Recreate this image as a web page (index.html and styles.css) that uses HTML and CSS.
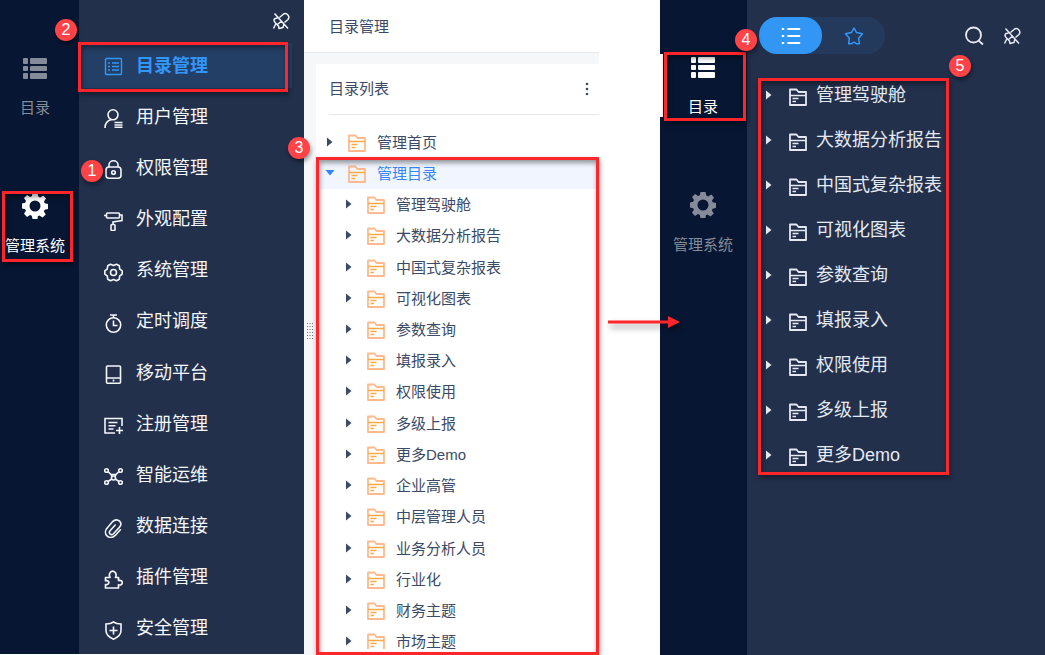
FILE: index.html
```html
<!DOCTYPE html>
<html lang="zh-CN">
<head>
    <meta charset="UTF-8">
    <meta name="viewport" content="width=device-width, initial-scale=1.0">
    <title>目录管理</title>
    <link rel="stylesheet" href="styles.css">
</head>
<body>

    <!-- Shared icons -->
    <svg class="sprite" aria-hidden="true">
        <symbol id="i-blocks" viewBox="0 0 26 26">
            <g fill="currentColor"><rect x="1" y="3" width="5" height="6" rx="1"/><rect x="8" y="3" width="17" height="6" rx="1"/><rect x="1" y="11" width="5" height="5" rx="1"/><rect x="8" y="11" width="17" height="5" rx="1"/><rect x="1" y="18" width="5" height="6" rx="1"/><rect x="8" y="18" width="17" height="6" rx="1"/></g>
        </symbol>
        <symbol id="i-cog" viewBox="0 0 26 26">
            <path fill="currentColor" fill-rule="evenodd" d="M10.5 0h5l.8 3.600 1.800.8L21.300 2.500 24 5.500 22 8.500l.7 1.700L26 11v5l-3.400.8-.7 1.700 1.900 3-3.300 3-3-1.900-1.700.7L15.500 26h-5l-.8-3.200-1.700-.7-3 1.900L2 20.800l1.900-3.100-.7-1.500L0 15.500v-5l3.200-.7.8-1.700L2 5.100 5.100 2l3 2 1.700-.7zM13 7.500a5.500 5.500 0 1 0 0 11 5.500 5.500 0 0 0 0-11z"/>
        </symbol>
        <symbol id="i-unpin" viewBox="0 0 18 18">
            <g fill="none" stroke="currentColor" stroke-width="1.500" stroke-linejoin="round"><path d="M7.500 5.500L11 2.500Q13 .5 15.500 2.500 18 5 16 7.500L12.500 10.500M5.500 6L2.500 6.800Q1 9 4 11.500L1.500 16.500M4 11.500L6.500 14l.5 2.500 4-1 .8-3M2.500 1.500L16 16.500M5 13L9.500 9"/></g>
        </symbol>
        <symbol id="i-catalog" viewBox="0 0 19 19">
            <g fill="none" stroke="currentColor" stroke-width="1.400"><rect x="1.500" y="1.500" width="16" height="16" rx="1"/><path d="M4 6h2M8 6h7M4 9.500h2M8 9.500h7M4 13h2M8 13h7"/></g>
        </symbol>
        <symbol id="i-user" viewBox="0 0 19 19">
            <g fill="none" stroke="currentColor" stroke-width="1.600"><circle cx="9" cy="5.800" r="5"/><path d="M1 19c0-5 2.500-7.500 6.500-8.500M10.500 13.500h8M10.500 16h8M10.500 18.300h8"/></g>
        </symbol>
        <symbol id="i-lock" viewBox="0 0 19 19">
            <g fill="none" stroke="currentColor" stroke-width="1.600"><rect x="2" y="7" width="15" height="11.200" rx="3"/><path d="M5 7V5a4.500 4.200 0 0 1 9 0v2"/><circle cx="9.500" cy="12.500" r="1.800"/></g>
        </symbol>
        <symbol id="i-roller" viewBox="0 0 19 19">
            <g fill="none" stroke="currentColor" stroke-width="1.600"><rect x="2.500" y="1" width="13" height="5" rx="1"/><path d="M0 3.500h2.500M15.500 3H18v5.500L9 10v2.500"/><rect x="7" y="12.500" width="4" height="6" rx="1"/></g>
        </symbol>
        <symbol id="i-setting" viewBox="0 0 19 19">
            <g fill="none" stroke="currentColor" stroke-width="1.600"><path d="M6.500 1.200L9.500 2.500l3-1.300 2.800 1.600.4 3.200 2.500 1.800v3.400l-2.500 1.800-.4 3.200-2.800 1.600-3-1.300-3 1.300-2.800-1.600-.4-3.200L.8 11.200V7.800L3.300 6l.4-3.200z" stroke-linejoin="round"/><circle cx="9.500" cy="9.500" r="3"/></g>
        </symbol>
        <symbol id="i-timer" viewBox="0 0 19 19">
            <g fill="none" stroke="currentColor" stroke-width="1.600"><circle cx="9.500" cy="11" r="7.200"/><path d="M6 1h7M9.500 1v3M9.500 6.500V11.500h4"/></g>
        </symbol>
        <symbol id="i-mobile" viewBox="0 0 19 19">
            <g fill="none" stroke="currentColor" stroke-width="1.600"><rect x="2.500" y="1" width="14" height="17.200" rx="1"/><path d="M2.500 13h14M9.500 14.500v2"/></g>
        </symbol>
        <symbol id="i-register" viewBox="0 0 19 19">
            <g fill="none" stroke="currentColor" stroke-width="1.600"><path d="M18 10V2.500H1v14.500h10M4.500 6.500h9M4.500 9.800h7M4.500 13h5M15.500 11v7M12 14.500h7"/></g>
        </symbol>
        <symbol id="i-nodes" viewBox="0 0 19 19">
            <g fill="none" stroke="currentColor" stroke-width="1.600"><circle cx="2.500" cy="3.500" r="1.800"/><circle cx="16.500" cy="3.500" r="1.800"/><circle cx="2.500" cy="15.500" r="1.800"/><circle cx="16.500" cy="15.500" r="1.800"/><circle cx="9.500" cy="11" r="2"/><path d="M4 4.500L7 7.500h5l3-3M4 14.500l3.800-2.500M15 14.500L11.200 12M7 7.500l1.200 2M12 7.500l-1.200 2"/></g>
        </symbol>
        <symbol id="i-clip" viewBox="1 1 22 22">
            <path fill="none" stroke="currentColor" stroke-width="1.800" stroke-linecap="round" d="M20 13.500l-6 6.500c-3 3-7 3-9.500.5s-2.500-6.500.5-9.500l6-7c2.500-2.600 6-2.500 8-.5s2 5-.5 7.500l-6.500 7c-1.300 1.300-3 1.300-4 .3s-1-2.600.3-4l5.700-6.300"/>
        </symbol>
        <symbol id="i-plugin" viewBox="0 0 19 19">
            <path fill="none" stroke="currentColor" stroke-width="1.700" stroke-linejoin="round" d="M1.500 7.500H6C4.500 4.500 6 1.200 8.700 1.200S13 4.500 11.500 7.500h3v3c2.500-.7 3.800.7 3.800 2.200s-1.300 2.800-3.800 2.100V18h-13v-3.500C6 15.500 6 9.500 1.500 10.800z"/>
        </symbol>
        <symbol id="i-shield" viewBox="0 0 19 19">
            <path fill="none" stroke="currentColor" stroke-width="1.600" d="M9.500 1c2 1.500 5 2 7.500 2v6.500c0 4-3.500 7-7.500 8.700C5.500 16.500 2 13.500 2 9.500V3c2.500 0 5.500-.5 7.500-2zM9.500 5.500v8M5.500 9.500h8"/>
        </symbol>
        <symbol id="i-folder" viewBox="0 0 18 18">
            <g fill="none" stroke="currentColor" stroke-width="1.800" stroke-linejoin="round"><path d="M1 17V1.500h6.500L9.500 4H17v13z"/><path class="folder-lines" d="M1 7.500h16M3.500 10.500h6M3.500 13.500h3.500" stroke-width="1.400"/></g>
        </symbol>
        <symbol id="i-caret" viewBox="0 0 6 10">
            <path fill="currentColor" d="M0 .5L5.500 5 0 9.500z"/>
        </symbol>
        <symbol id="i-list" viewBox="0 0 20 18">
            <path fill="none" stroke="currentColor" stroke-width="1.800" stroke-linecap="round" d="M1.500 2h1M7 2h11.500M1.500 9h1M7 9h11.500M1.500 16h1M7 16h11.500"/>
        </symbol>
        <symbol id="i-star" viewBox="0 0 20 18">
            <path fill="none" stroke="currentColor" stroke-width="1.500" stroke-linejoin="round" d="M10 1l2.600 4.600 5.900 1.200-3.900 4.400.8 5.600H13L10 15.200 7 16.800H4.600l.8-5.600L1.500 6.800l5.900-1.200z"/>
        </symbol>
        <symbol id="i-search" viewBox="0 0 20 20">
            <path fill="none" stroke="currentColor" stroke-width="1.800" d="M9.500 1.500a7.500 7.500 0 1 1 0 15 7.500 7.500 0 0 1 0-15zM14.800 14.800L19 18.500"/>
        </symbol>
    </svg>

    <div class="page">

        <nav class="rail rail-left">
            <a class="rail-item" href="#"><svg><use href="#i-blocks"/></svg><span>目录</span></a>
            <a class="rail-item active" href="#">
                <svg><use href="#i-cog"/></svg><span>管理系统</span>
                <i class="mark mark-system"></i>
                <b class="badge badge-1">1</b>
            </a>
        </nav>

        <nav class="menu">
            <div class="menu-top">
                <button type="button" class="icon-btn" aria-label="取消固定"><svg class="pin"><use href="#i-unpin"/></svg></button>
            </div>
            <ul class="menu-list">
                <li><a class="active" href="#"><svg><use href="#i-catalog"/></svg>目录管理<i class="mark mark-menu"></i><b class="badge badge-2">2</b></a></li>
                <li><a href="#"><svg><use href="#i-user"/></svg>用户管理</a></li>
                <li><a href="#"><svg><use href="#i-lock"/></svg>权限管理</a></li>
                <li><a href="#"><svg><use href="#i-roller"/></svg>外观配置</a></li>
                <li><a href="#"><svg><use href="#i-setting"/></svg>系统管理</a></li>
                <li><a href="#"><svg><use href="#i-timer"/></svg>定时调度</a></li>
                <li><a href="#"><svg><use href="#i-mobile"/></svg>移动平台</a></li>
                <li><a href="#"><svg><use href="#i-register"/></svg>注册管理</a></li>
                <li><a href="#"><svg><use href="#i-nodes"/></svg>智能运维</a></li>
                <li><a href="#"><svg><use href="#i-clip"/></svg>数据连接</a></li>
                <li><a href="#"><svg><use href="#i-plugin"/></svg>插件管理</a></li>
                <li><a href="#"><svg><use href="#i-shield"/></svg>安全管理</a></li>
            </ul>
        </nav>

        <main class="content">
            <h1>目录管理</h1>
            <div class="content-body">
                <div class="gutter">
                    <svg class="grip" viewBox="0 0 6 16"><path stroke="#6d7583" stroke-dasharray="1 2" d="M.5 0v16M3 0v16M5.500 0v16"/></svg>
                </div>
                <section class="card">
                    <header class="card-head">
                        <h2>目录列表</h2>
                        <button type="button" class="icon-btn" aria-label="更多"><svg class="dots" viewBox="0 0 4 14"><g fill="#3b4a66"><circle cx="2" cy="2" r="1.300"/><circle cx="2" cy="7" r="1.300"/><circle cx="2" cy="12" r="1.300"/></g></svg></button>
                    </header>
                    <div class="tree-wrap">
                        <div class="tree-scroll">
                            <ul class="tree">
                                <li><svg class="caret"><use href="#i-caret"/></svg><svg class="folder"><use href="#i-folder"/></svg>管理首页</li>
                                <li class="selected"><svg class="caret open"><use href="#i-caret"/></svg><svg class="folder"><use href="#i-folder"/></svg>管理目录</li>
                                <li class="sub"><svg class="caret"><use href="#i-caret"/></svg><svg class="folder"><use href="#i-folder"/></svg>管理驾驶舱</li>
                                <li class="sub"><svg class="caret"><use href="#i-caret"/></svg><svg class="folder"><use href="#i-folder"/></svg>大数据分析报告</li>
                                <li class="sub"><svg class="caret"><use href="#i-caret"/></svg><svg class="folder"><use href="#i-folder"/></svg>中国式复杂报表</li>
                                <li class="sub"><svg class="caret"><use href="#i-caret"/></svg><svg class="folder"><use href="#i-folder"/></svg>可视化图表</li>
                                <li class="sub"><svg class="caret"><use href="#i-caret"/></svg><svg class="folder"><use href="#i-folder"/></svg>参数查询</li>
                                <li class="sub"><svg class="caret"><use href="#i-caret"/></svg><svg class="folder"><use href="#i-folder"/></svg>填报录入</li>
                                <li class="sub"><svg class="caret"><use href="#i-caret"/></svg><svg class="folder"><use href="#i-folder"/></svg>权限使用</li>
                                <li class="sub"><svg class="caret"><use href="#i-caret"/></svg><svg class="folder"><use href="#i-folder"/></svg>多级上报</li>
                                <li class="sub"><svg class="caret"><use href="#i-caret"/></svg><svg class="folder"><use href="#i-folder"/></svg>更多Demo</li>
                                <li class="sub"><svg class="caret"><use href="#i-caret"/></svg><svg class="folder"><use href="#i-folder"/></svg>企业高管</li>
                                <li class="sub"><svg class="caret"><use href="#i-caret"/></svg><svg class="folder"><use href="#i-folder"/></svg>中层管理人员</li>
                                <li class="sub"><svg class="caret"><use href="#i-caret"/></svg><svg class="folder"><use href="#i-folder"/></svg>业务分析人员</li>
                                <li class="sub"><svg class="caret"><use href="#i-caret"/></svg><svg class="folder"><use href="#i-folder"/></svg>行业化</li>
                                <li class="sub"><svg class="caret"><use href="#i-caret"/></svg><svg class="folder"><use href="#i-folder"/></svg>财务主题</li>
                                <li class="sub"><svg class="caret"><use href="#i-caret"/></svg><svg class="folder"><use href="#i-folder"/></svg>市场主题</li>
                            </ul>
                        </div>
                        <i class="mark mark-tree"></i>
                        <b class="badge badge-3">3</b>
                    </div>
                </section>
            </div>
        </main>

        <div class="between">
            <svg class="arrow" viewBox="0 0 72 14"><path fill="#ff262b" d="M0 5.500h60V1l12 6-12 6V8.500H0z"/></svg>
        </div>

        <nav class="rail rail-right">
            <a class="rail-item active" href="#">
                <svg><use href="#i-blocks"/></svg><span>目录</span>
                <i class="mark mark-catalog"></i>
                <b class="badge badge-4">4</b>
            </a>
            <a class="rail-item" href="#"><svg><use href="#i-cog"/></svg><span>管理系统</span></a>
        </nav>

        <aside class="panel">
            <div class="toolbar">
                <div class="switch">
                    <button type="button" class="on" aria-label="目录"><svg><use href="#i-list"/></svg></button>
                    <button type="button" aria-label="收藏"><svg><use href="#i-star"/></svg></button>
                </div>
                <button type="button" class="icon-btn push" aria-label="搜索"><svg class="search"><use href="#i-search"/></svg></button>
                <button type="button" class="icon-btn" aria-label="取消固定"><svg class="pin"><use href="#i-unpin"/></svg></button>
            </div>
            <ul class="nav-tree">
                <li><svg class="caret"><use href="#i-caret"/></svg><svg class="folder"><use href="#i-folder"/></svg>管理驾驶舱</li>
                <li><svg class="caret"><use href="#i-caret"/></svg><svg class="folder"><use href="#i-folder"/></svg>大数据分析报告</li>
                <li><svg class="caret"><use href="#i-caret"/></svg><svg class="folder"><use href="#i-folder"/></svg>中国式复杂报表</li>
                <li><svg class="caret"><use href="#i-caret"/></svg><svg class="folder"><use href="#i-folder"/></svg>可视化图表</li>
                <li><svg class="caret"><use href="#i-caret"/></svg><svg class="folder"><use href="#i-folder"/></svg>参数查询</li>
                <li><svg class="caret"><use href="#i-caret"/></svg><svg class="folder"><use href="#i-folder"/></svg>填报录入</li>
                <li><svg class="caret"><use href="#i-caret"/></svg><svg class="folder"><use href="#i-folder"/></svg>权限使用</li>
                <li><svg class="caret"><use href="#i-caret"/></svg><svg class="folder"><use href="#i-folder"/></svg>多级上报</li>
                <li>
                    <svg class="caret"><use href="#i-caret"/></svg><svg class="folder"><use href="#i-folder"/></svg>更多Demo
                    <i class="mark mark-nav"></i>
                    <b class="badge badge-5">5</b>
                </li>
            </ul>
        </aside>

    </div>

</body>
</html>
```
FILE: styles.css
```css
* {
    box-sizing: border-box;
}
body {
    margin: 0;
    background-color: #fff;
    font-family: "Liberation Sans", "Noto Sans CJK SC", sans-serif;
    font-size: 15px;
    line-height: 20px;
    color: #3b4a66;
}
ul {
    list-style: none;
    margin: 0;
    padding: 0;
}
a {
    color: inherit;
    text-decoration: none;
}
svg {
    display: block;
    flex: none;
}
.sprite {
    position: absolute;
    width: 0;
    height: 0;
}
.page {
    display: flex;
    height: 100vh;
    min-height: 655px;
    overflow: hidden;
}
.icon-btn {
    display: flex;
    padding: 0;
    border: 0;
    background: none;
    color: inherit;
    cursor: pointer;
}
.pin {
    width: 18px;
    height: 18px;
}

/* Dark icon rails */
.rail {
    flex: none;
    display: flex;
    flex-direction: column;
    gap: 75px;
    background-color: #071632;
    color: #858b99;
}
.rail-left {
    width: 79px;
    padding: 55px 9px 0 0;
    margin-bottom: 1px;
}
.rail-right {
    width: 87px;
    padding: 54px 1px 0 0;
}
.rail-item {
    position: relative;
    display: flex;
    flex-direction: column;
    align-items: center;
    gap: 17px;
}
.rail-item svg {
    width: 26px;
    height: 26px;
}
.rail-item.active {
    color: #fff;
}
.rail-right .rail-item.active {
    box-shadow: inset 3px 0 #fff;
}

/* System menu */
.menu {
    flex: none;
    display: flex;
    flex-direction: column;
    width: 225px;
    margin-bottom: 1px;
    background-color: #22304c;
    color: #f3f6fb;
}
.menu-top {
    display: flex;
    justify-content: flex-end;
    height: 40px;
    padding: 12px 14px 0 0;
}
.menu-list {
    flex: 1;
    display: flex;
    flex-direction: column;
}
.menu-list li {
    flex: 1;
    display: flex;
    align-items: center;
}
.menu-list a {
    position: relative;
    flex: 1;
    display: flex;
    align-items: center;
    gap: 13px;
    height: 45px;
    margin-right: 12px;
    padding-left: 25px;
    font-size: 18px;
}
.menu-list svg {
    width: 19px;
    height: 19px;
    margin-top: 4px;
}
.menu-list a.active {
    background-color: #243f65;
    color: #3296fa;
    font-weight: bold;
}
.menu-list a.active svg {
    margin-top: 2px;
}

/* Directory management */
.content {
    flex: 1 1 295px;
    display: flex;
    flex-direction: column;
}
.content h1 {
    margin: 0;
    padding: 17px 25px 15px;
    border-bottom: 1px solid #e6e8ec;
    font-size: 15px;
    font-weight: normal;
}
.content-body {
    flex: 1;
    display: flex;
    min-height: 0;
    padding-top: 11px;
    background-color: #f6f7f9;
}
.gutter {
    flex: none;
    display: flex;
    align-items: center;
    justify-content: center;
    width: 12px;
    padding-bottom: 58px;
}
.grip {
    width: 6px;
    height: 16px;
}
.card {
    flex: 1;
    display: flex;
    flex-direction: column;
    background-color: #fff;
}
.card-head {
    display: flex;
    align-items: center;
    justify-content: space-between;
    height: 51px;
    margin-left: 13px;
    padding-right: 10px;
    border-bottom: 1px solid #e6e8ec;
}
.card-head h2 {
    margin: 0;
    font-size: 15px;
    font-weight: normal;
}
.dots {
    width: 4px;
    height: 14px;
}
.tree-wrap {
    position: relative;
    flex: 1;
    display: flex;
    min-height: 0;
    padding: 12px 0 6px;
}
.tree-scroll {
    flex: 1;
    display: flex;
    overflow: hidden;
}
/* The last row runs past the bottom edge of the list */
.tree {
    flex: 1;
    display: flex;
    flex-direction: column;
    margin-bottom: -9px;
}
.tree li {
    flex: 1;
    display: flex;
    align-items: center;
    padding-left: 11px;
}
.tree li.sub {
    padding-left: 30px;
}
.tree li.selected {
    background-color: #f0f5ff;
    color: #3585f7;
}
.caret {
    width: 6px;
    height: 10px;
}
.tree .caret {
    margin-bottom: 2px;
}
.caret.open {
    transform: rotate(90deg);
}
.folder {
    width: 18px;
    height: 18px;
}
.tree .folder {
    margin: 0 11px 0 15px;
    color: #ffb98c;
}
.tree .folder use {
    --line: #ffa940;
}
.folder-lines {
    stroke: var(--line, currentColor);
}
.between {
    position: relative;
    flex: none;
    width: 61px;
}
.arrow {
    position: absolute;
    z-index: 2;
    left: 9px;
    top: 49%;
    width: 72px;
    height: 14px;
    margin-top: -6px;
    filter: drop-shadow(2px 4px 3px rgba(0, 0, 0, 0.4));
}

/* Resulting catalog panel */
.panel {
    flex: 1 1 298px;
    background-color: #22304c;
    color: #e4e9f2;
}
.toolbar {
    display: flex;
    align-items: center;
    gap: 19px;
    padding: 17px 24px 18px 12px;
}
.switch {
    display: flex;
    border-radius: 18px;
    background-color: #243a5c;
}
.switch button {
    display: flex;
    align-items: center;
    justify-content: center;
    width: 63px;
    height: 37px;
    padding: 0;
    border: 0;
    border-radius: 18px;
    background: none;
    color: #3296fa;
}
.switch .on {
    background-color: #3296f5;
    color: #fff;
}
.switch svg {
    width: 20px;
    height: 18px;
}
.push {
    margin-left: auto;
}
.search {
    width: 20px;
    height: 20px;
}
.nav-tree {
    position: relative;
    width: fit-content;
    margin-left: 11px;
    padding-right: 7px;
    font-size: 18px;
}
.nav-tree li {
    display: flex;
    align-items: center;
    height: 45px;
    padding-left: 8px;
}
.nav-tree .folder {
    margin: 4px 9px 0 17px;
}

/* Numbered callouts */
.mark {
    position: absolute;
    z-index: 2;
    border: 3px solid #ff262b;
    box-shadow: 1px 3px 5px rgba(0, 0, 0, 0.4), inset 1px 3px 5px rgba(0, 0, 0, 0.4);
    pointer-events: none;
}
.mark-system {
    inset: -2px -3px -6px 2px;
}
.mark-menu {
    inset: -1px 4px -4px -1px;
}
.mark-tree {
    inset: 42px 0 0 0;
}
.mark-catalog {
    inset: -2px 0 -4px 4px;
}
.mark-nav {
    inset: 6px 0 2px 0;
}
.badge {
    position: absolute;
    z-index: 3;
    width: 22px;
    height: 22px;
    border-radius: 50%;
    background-color: #ff4347;
    box-shadow: 1px 3px 4px rgba(0, 0, 0, 0.4);
    color: #fff;
    font-size: 16px;
    font-weight: normal;
    line-height: 22px;
    text-align: center;
}
.badge-1 {
    left: 81px;
    top: -33px;
}
.badge-2 {
    left: -24px;
    top: -24px;
}
.badge-3 {
    left: -28px;
    top: 22px;
}
.badge-4 {
    right: -11px;
    top: -25px;
}
.badge-5 {
    right: -22px;
    top: -17px;
}
```
